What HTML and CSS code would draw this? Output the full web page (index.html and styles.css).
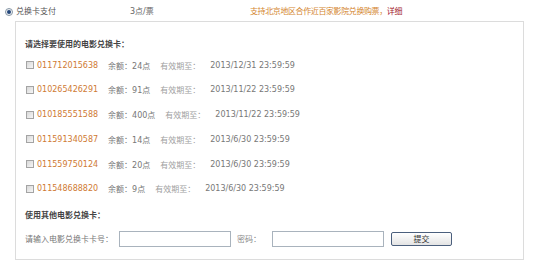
FILE: index.html
```html
<!DOCTYPE html>
<html>
    <head>
        <meta charset="utf-8" />
        <title>兑换卡支付</title>
        <link rel="stylesheet" href="styles.css">
    </head>
    <body>
        <div class="pay-row">
            <span class="radio"><i></i></span>
            <span class="pay-name">兑换卡支付</span>
            <span class="pay-price">3点/票</span>
            <span class="pay-note">支持北京地区合作近百家影院兑换购票，<a href="#">详细</a></span>
        </div>
        <div class="card-box">
            <h3>请选择要使用的电影兑换卡：</h3>
            <ul class="cards">
                <li><span class="check"></span><span class="num">011712015638</span><span class="bal">余额：24点</span><span class="lbl">有效期至：</span><span class="date">2013/12/31 23:59:59</span></li>
                <li><span class="check"></span><span class="num">010265426291</span><span class="bal">余额：91点</span><span class="lbl">有效期至：</span><span class="date">2013/11/22 23:59:59</span></li>
                <li><span class="check"></span><span class="num">010185551588</span><span class="bal">余额：400点</span><span class="lbl">有效期至：</span><span class="date">2013/11/22 23:59:59</span></li>
                <li><span class="check"></span><span class="num">011591340587</span><span class="bal">余额：14点</span><span class="lbl">有效期至：</span><span class="date">2013/6/30 23:59:59</span></li>
                <li><span class="check"></span><span class="num">011559750124</span><span class="bal">余额：20点</span><span class="lbl">有效期至：</span><span class="date">2013/6/30 23:59:59</span></li>
                <li><span class="check"></span><span class="num">011548688820</span><span class="bal">余额：9点</span><span class="lbl">有效期至：</span><span class="date">2013/6/30 23:59:59</span></li>
            </ul>
            <h3 class="other">使用其他电影兑换卡：</h3>
            <div class="other-row">
                <span class="in-lbl">请输入电影兑换卡卡号：</span>
                <input class="txt txt-num" type="text">
                <span class="pw-lbl">密码：</span>
                <input class="txt txt-pw" type="text">
                <button class="btn">提交</button>
            </div>
        </div>
    </body>
</html>
```

FILE: styles.css
```css
/** Reset **/
html, body, div, span, h3, ul, li, a, i {
  margin: 0;
  padding: 0;
  border: 0;
  font: inherit;
}
ul {
  list-style: none;
}
*,
*:before,
*:after {
  box-sizing: border-box;
}

/** Page **/
body {
  width: 550px;
  height: 263px;
  background: #fff;
  font-family: "DejaVu Sans", "Noto Sans CJK SC", sans-serif;
  font-size: 8px;
  color: #666;
  overflow: hidden;
}

/* top payment line */
.pay-row {
  display: flex;
  align-items: center;
  height: 21px;
  padding: 3px 0 0 5px;
  line-height: 18px;
}
.radio {
  display: flex;
  align-items: center;
  justify-content: center;
  width: 8px;
  height: 8px;
  border: 1px solid #8796a5;
  border-radius: 50%;
  background: #eef1f4;
}
.radio i {
  width: 4px;
  height: 4px;
  border-radius: 50%;
  background: #24477a;
}
.pay-name {
  width: 114px;
  margin-left: 3px;
  color: #555;
}
.pay-price {
  width: 120px;
  color: #666;
}
.pay-note {
  color: #d4862f;
  letter-spacing: -0.4px;
}
.pay-note a {
  color: #a3202a;
  text-decoration: none;
}

/* card list box */
.card-box {
  width: 509px;
  height: 239px;
  margin-left: 15px;
  padding: 14px 8px 0 9px;
  border: 1px solid #dcdcdc;
}
.card-box h3 {
  line-height: 18px;
  font-weight: bold;
  color: #444;
}
.cards {
  display: flex;
  flex-direction: column;
  gap: 4.8px;
  margin-top: 1px;
}
.cards li {
  display: flex;
  align-items: center;
  height: 20px;
  padding-left: 1px;
}
.check {
  width: 8px;
  height: 8px;
  border: 1px solid #a4a4a4;
  background: linear-gradient(135deg, #d8d8d8, #f6f6f6);
}
.num {
  margin-left: 3px;
  color: #cf7a33;
}
.bal {
  margin-left: 10px;
  color: #777;
}
.lbl {
  margin-left: 10px;
  color: #a0a0a0;
}
.date {
  margin-left: 10px;
  color: #777;
}

/* other card input */
.card-box h3.other {
  margin-top: 8px;
}
.other-row {
  display: flex;
  align-items: center;
  height: 18px;
  margin-top: 5px;
}
.in-lbl {
  width: 94px;
  color: #777;
}
.txt {
  height: 16px;
  border: 1px solid #a9b3bd;
  background: #fff;
  padding: 0;
}
.txt-num {
  width: 112px;
}
.pw-lbl {
  width: 35px;
  margin-left: 6px;
  color: #888;
}
.txt-pw {
  width: 112px;
}
.btn {
  width: 61px;
  height: 14px;
  margin-left: 7px;
  padding: 0;
  border: 1px solid #4b5f7d;
  border-radius: 2px;
  background: linear-gradient(#ffffff, #e4e4e4);
  font-family: "Noto Sans CJK SC", sans-serif;
  font-size: 8px;
  line-height: 12px;
  color: #333;
}
```
